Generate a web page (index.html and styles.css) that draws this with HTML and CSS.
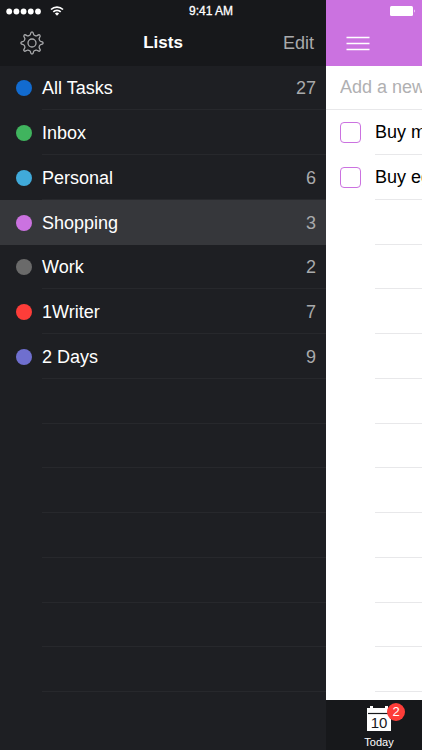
FILE: index.html
```html
<!DOCTYPE html>
<html lang="en">
<head>
<meta charset="utf-8">
<meta name="viewport" content="width=device-width, initial-scale=1">
<title>Lists</title>
<link rel="stylesheet" href="styles.css">
</head>
<body>
<div class="status">
  <div class="signal">
    <svg class="dots" viewBox="0 0 36 7" fill="#fff" aria-hidden="true"><circle cx="3.2" cy="3.5" r="2.9"/><circle cx="10.4" cy="3.5" r="2.9"/><circle cx="17.6" cy="3.5" r="2.9"/><circle cx="24.8" cy="3.5" r="2.9"/><circle cx="32" cy="3.5" r="2.9"/></svg>
    <svg class="wifi" viewBox="0 0 14 10" aria-hidden="true"><path d="M1 3.5a8.6 8.6 0 0 1 12 0M3.3 5.8a5.3 5.3 0 0 1 7.4 0" fill="none" stroke="#fff" stroke-width="1.7"/><path d="M4.9 7.5a3 3 0 0 1 4.2 0L7 9.8z" fill="#fff"/></svg>
  </div>
  <span class="time">9:41 AM</span>
  <svg class="battery" viewBox="0 0 26 10" fill="#fff" aria-hidden="true"><rect width="23" height="10" rx="1.5"/><path d="M24 3.2q1.6 1.8 0 3.6z"/></svg>
</div>
<div class="app">
  <nav class="sidebar">
    <header class="bar">
      <button class="icon-button" aria-label="Settings">
        <svg class="gear" viewBox="0 0 24 24" fill="none" stroke="#a9aaac" stroke-width="1.3" stroke-linejoin="round" aria-hidden="true"><circle cx="12" cy="12" r="4"/><path d="M10.4 3.3Q10.8 .8 12 .8T13.6 3.3Q13.8 4.2 15.1 4.6Q16.4 5.2 17 4.7Q19 3.2 19.9 4.1T19.3 7Q18.8 7.6 19.4 8.9Q19.8 10.2 20.7 10.4Q23.2 10.8 23.2 12T20.7 13.6Q19.8 13.8 19.4 15.1Q18.8 16.4 19.3 17Q20.8 19 19.9 19.9T17 19.3Q16.4 18.8 15.1 19.4Q13.8 19.8 13.6 20.7Q13.2 23.2 12 23.2T10.4 20.7Q10.2 19.8 8.9 19.4Q7.6 18.8 7 19.3Q5 20.8 4.1 19.9T4.7 17Q5.2 16.4 4.6 15.1Q4.2 13.8 3.3 13.6Q.8 13.2 .8 12T3.3 10.4Q4.2 10.2 4.6 8.9Q5.2 7.6 4.7 7Q3.2 5 4.1 4.1T7 4.7Q7.6 5.2 8.9 4.6Q10.2 4.2 10.4 3.3z"/></svg>
      </button>
      <h1 class="title">Lists</h1>
      <button class="edit">Edit</button>
    </header>
    <ul class="rows">
      <li class="row"><a class="list" href="#all"><span class="dot blue"></span><span class="name">All Tasks</span><span class="count">27</span></a></li>
      <li class="row"><a class="list" href="#inbox"><span class="dot green"></span><span class="name">Inbox</span></a></li>
      <li class="row"><a class="list" href="#personal"><span class="dot sky"></span><span class="name">Personal</span><span class="count">6</span></a></li>
      <li class="row"><a class="list selected" href="#shopping"><span class="dot violet"></span><span class="name">Shopping</span><span class="count">3</span></a></li>
      <li class="row"><a class="list" href="#work"><span class="dot gray"></span><span class="name">Work</span><span class="count">2</span></a></li>
      <li class="row"><a class="list" href="#writer"><span class="dot red"></span><span class="name">1Writer</span><span class="count">7</span></a></li>
      <li class="row"><a class="list" href="#days"><span class="dot indigo"></span><span class="name">2 Days</span><span class="count">9</span></a></li>
      <li class="row"></li><li class="row"></li><li class="row"></li><li class="row"></li><li class="row"></li><li class="row"></li><li class="row"></li>
    </ul>
  </nav>
  <main class="tasks">
    <header class="bar accent">
      <button class="icon-button" aria-label="Menu">
        <svg class="menu" viewBox="0 0 24 15" stroke="#fff" stroke-width="1.3" aria-hidden="true"><path d="M.5 1.5h23M.5 7.5h23M.5 13.5h23"/></svg>
      </button>
    </header>
    <ul class="rows">
      <li class="row full"><input class="new-task" type="text" placeholder="Add a new task" aria-label="Add a new task"></li>
      <li class="row"><label class="task"><input class="check" type="checkbox">Buy milk</label></li>
      <li class="row"><label class="task"><input class="check" type="checkbox">Buy eggs</label></li>
      <li class="row"></li><li class="row"></li><li class="row"></li><li class="row"></li><li class="row"></li><li class="row"></li><li class="row"></li><li class="row"></li><li class="row"></li><li class="row"></li><li class="row"></li>
    </ul>
    <footer class="tabs">
      <a class="tab" href="#today">
        <span class="calendar">
          <svg class="calendar-icon" viewBox="0 0 24 25" aria-hidden="true"><path d="M0 2h3V0h3v2h12V0h3v2h3v23H0z" fill="#fff"/><path d="M1 7.5h22" stroke="#17181b" stroke-width="1.2"/></svg>
          <span class="day">10</span>
          <span class="badge">2</span>
        </span>
        <span class="tab-label">Today</span>
      </a>
    </footer>
  </main>
</div>
</body>
</html>
```
FILE: styles.css
```css
* { box-sizing: border-box; }

body {
  margin: 0;
  font: 18px/22px "Liberation Sans", Arial, sans-serif;
  color: #fff;
  background: #1e1f23;
}

button, input { font: inherit; color: inherit; }
button { padding: 0; border: 0; background: none; }
a { color: inherit; text-decoration: none; }
svg { display: block; }

.status {
  position: absolute;
  inset: 0 0 auto;
  z-index: 1;
  display: grid;
  grid-template-columns: 1fr auto 1fr;
  align-items: center;
  height: 22px;
  padding: 0 6px;
}
.signal { display: flex; align-items: center; gap: 8px; }
.dots { width: 36px; height: 7px; }
.wifi { width: 14px; height: 10px; }
.time { font-size: 12px; -webkit-text-stroke: 0.3px #fff; }
.battery { justify-self: end; width: 26px; height: 10px; }

.app { display: flex; height: 100vh; overflow: hidden; }
.sidebar { flex: 1; min-width: 0; overflow: hidden; }

.bar {
  display: grid;
  grid-template-columns: 1fr auto 1fr;
  align-items: center;
  height: 66px;
  padding: 20px 12px 0;
  background: #17181b;
}
.accent { background: #cb72e0; }
.icon-button { justify-self: start; padding: 0 8px; }
.gear { width: 24px; height: 24px; }
.menu { width: 24px; height: 15px; }
.title { margin: 0; font-size: 17px; line-height: 22px; font-weight: 700; }
.edit { justify-self: end; color: #a9aaac; }

.rows {
  display: grid;
  grid-template-rows: repeat(4, 44px 45px 45px 45px);
  margin: 0;
  padding: 0;
  list-style: none;
}
.row {
  background: linear-gradient(#27282c, #27282c) 42px 100% / 100% 1px no-repeat;
}
.list {
  display: flex;
  align-items: center;
  gap: 10px;
  height: 100%;
  padding: 0 10px 0 16px;
}
.selected { background: #36373b; }
.name { flex: 1; }
.count { color: #a9aaac; }
.dot { width: 16px; height: 16px; border-radius: 50%; }
.blue { background: #126bcf; }
.green { background: #40b45e; }
.sky { background: #40aada; }
.violet { background: #cb72e0; }
.gray { background: #6a6a6a; }
.red { background: #fd3d39; }
.indigo { background: #6f6fcf; }

.tasks {
  display: flex;
  flex-direction: column;
  flex: 0 0 96px;
  overflow: hidden;
  color: #000;
  background: #fff;
}
.tasks .bar { flex: none; }
.tasks .rows { flex: 1; min-height: 0; overflow: hidden; }
.tasks .row {
  background: linear-gradient(#e8e8ea, #e8e8ea) 49px 100% / 100% 1px no-repeat;
}
.tasks .full { background-position: 0 100%; }
.new-task {
  width: 100%;
  height: 43px;
  padding: 0 0 0 14px;
  border: 0;
  outline: 0;
  background: none;
}
.new-task::placeholder { color: #b0b0b2; opacity: 1; }
.task {
  display: flex;
  align-items: center;
  gap: 14px;
  height: 44px;
  padding-left: 14px;
  white-space: nowrap;
}
.check {
  appearance: none;
  flex: none;
  width: 21px;
  height: 21px;
  margin: 0;
  border: 1px solid #cb72e0;
  border-radius: 4px;
}

.tabs {
  flex: none;
  height: 50px;
  padding-left: 10px;
  color: #fff;
  background: #17181b;
}
.tab {
  display: flex;
  flex-direction: column;
  align-items: center;
  gap: 4px;
  padding-top: 6px;
}
.calendar { position: relative; }
.calendar-icon { width: 24px; height: 25px; }
.day {
  position: absolute;
  inset: 8px 0 auto;
  color: #17181b;
  font-size: 15px;
  line-height: 17px;
  text-align: center;
}
.badge {
  position: absolute;
  top: -3px;
  right: -14px;
  width: 18px;
  height: 18px;
  border-radius: 50%;
  background: #fd3d39;
  font-size: 13px;
  line-height: 18px;
  text-align: center;
}
.tab-label { font-size: 11px; line-height: 14px; }
```
